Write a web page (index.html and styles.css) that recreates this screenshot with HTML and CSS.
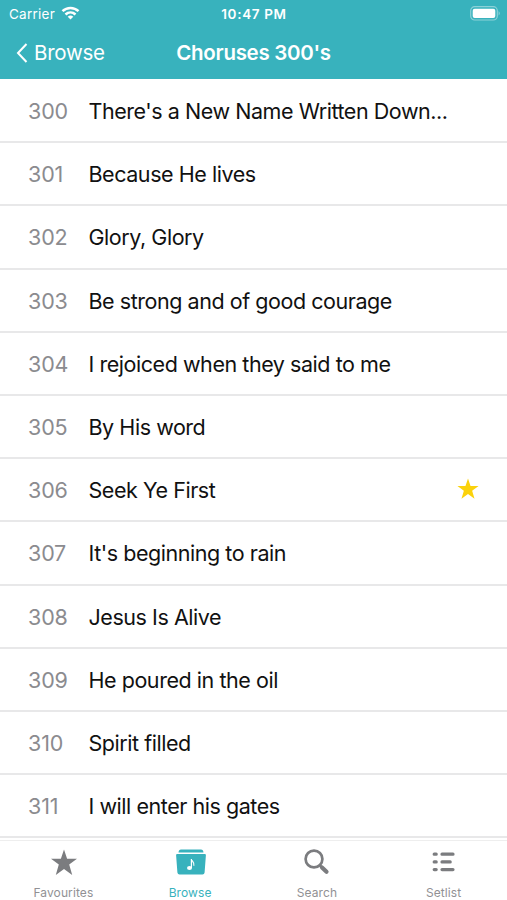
FILE: index.html
```html
<!DOCTYPE html>
<html lang="en">
<head>
<meta charset="utf-8">
<title>Choruses 300's</title>
<link rel="stylesheet" href="styles.css">
</head>
<body>
<header class="header">
  <div class="status">
    <div class="carrier"><span>Carrier</span>
      <svg class="wifi" width="19" height="14" viewBox="0 0 18 14" fill="none" stroke="#fff" stroke-width="2.5"><path d="M1 5.2C5.5.8 12.500.8 17 5.200"/><path d="M4 8.500C6.900 5.700 11.100 5.700 14 8.500"/><path d="M9 13.500 6.200 10.700Q9 8.500 11.800 10.700Z" fill="#fff" stroke="none"/></svg>
    </div>
    <div class="time">10:47 PM</div>
    <svg class="battery" width="31" height="15" viewBox="0 0 31 15"><rect x=".7" y=".7" width="26.600" height="13.300" rx="4" fill="none" stroke="#8cd1d8" stroke-width="1.200"/><rect x="2.700" y="2.700" width="22.600" height="9.300" rx="2" fill="#fff"/><path d="M28.600 5Q31 7.300 28.600 9.600Z" fill="#8cd1d8"/></svg>
  </div>
  <nav class="navbar">
    <a class="back"><svg width="12" height="20" viewBox="0 0 12 20" fill="none" stroke="#fff" stroke-width="2"><path d="M10.500 1 2 10l8.500 9"/></svg><span>Browse</span></a>
    <h1 class="title">Choruses 300's</h1>
  </nav>
</header>
<main class="list">
  <div class="row"><span class="num">300</span><span class="name">There's a New Name Written Down...</span></div>
  <div class="row"><span class="num">301</span><span class="name">Because He lives</span></div>
  <div class="row"><span class="num">302</span><span class="name">Glory, Glory</span></div>
  <div class="row"><span class="num">303</span><span class="name">Be strong and of good courage</span></div>
  <div class="row"><span class="num">304</span><span class="name">I rejoiced when they said to me</span></div>
  <div class="row"><span class="num">305</span><span class="name">By His word</span></div>
  <div class="row"><span class="num">306</span><span class="name">Seek Ye First</span><svg class="fav" width="22" height="22" viewBox="0 0 26 26"><path fill="#fbd20b" d="M13 .5 16 9.500H25.500L17.900 15.200 20.700 24.500 13 18.900 5.300 24.500 8.100 15.200.5 9.500H10Z"/></svg></div>
  <div class="row"><span class="num">307</span><span class="name">It's beginning to rain</span></div>
  <div class="row"><span class="num">308</span><span class="name">Jesus Is Alive</span></div>
  <div class="row"><span class="num">309</span><span class="name">He poured in the oil</span></div>
  <div class="row"><span class="num">310</span><span class="name">Spirit filled</span></div>
  <div class="row"><span class="num">311</span><span class="name">I will enter his gates</span></div>
</main>
<footer class="tabs">
  <a class="tab"><svg width="32" height="27" viewBox="0 0 32 27"><path fill="#7b7c7f" d="M16 .5 19.100 9.700H29L21.200 15.500 24.200 26 16 19.900 7.800 26 10.800 15.500 3 9.700H12.900Z"/></svg><span>Favourites</span></a>
  <a class="tab active"><svg width="32" height="27" viewBox="0 0 32 27"><path fill="#38b2bd" d="M3.500 3.500Q3.700 .5 6 .5H26Q28.300 .5 28.500 3.500Z"/><path fill="#38b2bd" d="M2.200 5H29.800Q31 5 30.900 6.300L29.600 23.500Q29.400 25.500 27.500 25.500H4.500Q2.600 25.500 2.400 23.500L1.100 6.300Q1 5 2.200 5Z"/><ellipse cx="14.500" cy="19" rx="2.500" ry="1.900" fill="#fff"/><path d="M16.400 19V10C16.700 12.500 20 13 18.800 16.800" fill="none" stroke="#fff" stroke-width="1.200"/></svg><span>Browse</span></a>
  <a class="tab"><svg width="32" height="27" viewBox="0 0 32 27" fill="none" stroke="#7b7c7f"><circle cx="13" cy="10" r="8.400" stroke-width="2.700"/><path d="m19 16.500 2 2" stroke-width="2.700"/><path d="m21 18.500 4.500 4.300" stroke-width="4.200" stroke-linecap="round"/></svg><span>Search</span></a>
  <a class="tab"><svg width="32" height="27" viewBox="0 0 32 27" stroke="#7b7c7f" stroke-width="3.200" stroke-linecap="round"><path d="M6.200 5.200H8.200M14 5.200H25M6.200 12.900H8.200M14 12.900H22.200M6.200 20.600H8.200M14 20.600H25"/></svg><span>Setlist</span></a>
</footer>
</body>
</html>
```

FILE: styles.css
```css
* { box-sizing: border-box; }
body {
  margin: 0;
  width: 507px;
  height: 900px;
  overflow: hidden;
  display: flex;
  flex-direction: column;
  background: #fff;
  color: #111;
  font-family: Inter, "Liberation Sans", sans-serif;
}
.header { height: 79px; flex: none; background: #38b2bd; color: #fff; }
.status {
  height: 27px;
  display: grid;
  grid-template-columns: 1fr auto 1fr;
  align-items: center;
  padding: 0 6px 0 9px;
  font-size: 13px;
}
.carrier { display: flex; align-items: center; gap: 6px; font-size: 13.500px; letter-spacing: .25px; }
.carrier svg { margin-top: -2px; }
.time { font-size: 13.500px; font-weight: 600; letter-spacing: .65px; margin-right: 2px; }
.battery { justify-self: end; }
.navbar {
  height: 51px;
  display: grid;
  grid-template-columns: 1fr auto 1fr;
  align-items: center;
  padding: 0 16px;
}
.back { display: flex; align-items: center; gap: 6px; font-size: 20.500px; letter-spacing: -.25px; }
.title { margin: 0; font-size: 20.500px; font-weight: 600; letter-spacing: -.3px; }
.list { flex: none; height: 760px; padding-top: 1px; }
.row {
  height: 63.200px;
  display: flex;
  align-items: center;
  padding: 1px 28px 0;
  border-bottom: 2px solid #e8e8e9;
}
.num { width: 60.500px; font-size: 21.500px; color: #8b8b8f; letter-spacing: -.15px; }
.name { font-size: 21.500px; letter-spacing: -.45px; white-space: nowrap; }
.fav { margin-left: auto; margin-top: -2px; }
.tabs {
  flex: none;
  height: 60px;
  margin-top: 1px;
  display: grid;
  grid-template-columns: repeat(4, 1fr);
  border-top: 1px solid #eee;
  background: #fff;
}
.tab {
  display: flex;
  flex-direction: column;
  align-items: center;
  padding-top: 8px;
  gap: 9px;
  color: #919194;
  font-size: 12px;
  line-height: 16px;
  letter-spacing: .1px;
}
.tab svg { margin-left: 1px; }
.active { color: #38b2bd; }
```
